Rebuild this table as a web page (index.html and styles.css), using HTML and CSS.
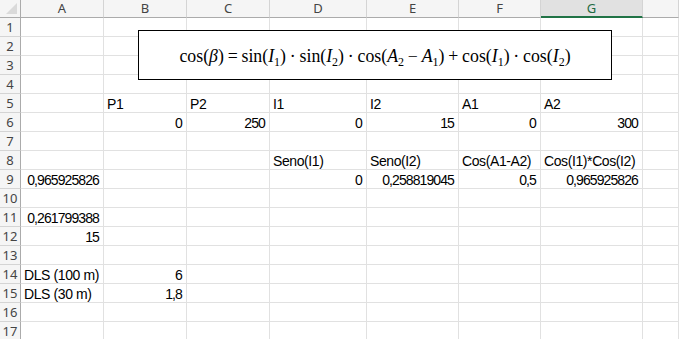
FILE: index.html
```html
<!DOCTYPE html>
<html lang="es">
<head>
<meta charset="utf-8">
<title>Hoja</title>
<link rel="stylesheet" href="styles.css">
</head>
<body>
<div class="sheet">
  <div class="grid">
    <div class="corner"><span class="tri"></span></div>
    <div class="ch">A</div><div class="ch">B</div><div class="ch">C</div><div class="ch">D</div><div class="ch">E</div><div class="ch">F</div><div class="ch sel">G</div><div class="ch"></div>

    <div class="rh">1</div><div class="c"></div><div class="c"></div><div class="c"></div><div class="c"></div><div class="c"></div><div class="c"></div><div class="c"></div><div class="c"></div>
    <div class="rh">2</div><div class="c"></div><div class="c"></div><div class="c"></div><div class="c"></div><div class="c"></div><div class="c"></div><div class="c"></div><div class="c"></div>
    <div class="rh">3</div><div class="c"></div><div class="c"></div><div class="c"></div><div class="c"></div><div class="c"></div><div class="c"></div><div class="c"></div><div class="c"></div>
    <div class="rh">4</div><div class="c"></div><div class="c"></div><div class="c"></div><div class="c"></div><div class="c"></div><div class="c"></div><div class="c"></div><div class="c"></div>
    <div class="rh">5</div><div class="c"></div><div class="c">P1</div><div class="c">P2</div><div class="c">I1</div><div class="c">I2</div><div class="c">A1</div><div class="c">A2</div><div class="c"></div>
    <div class="rh">6</div><div class="c"></div><div class="c n">0</div><div class="c n">250</div><div class="c n">0</div><div class="c n">15</div><div class="c n">0</div><div class="c n">300</div><div class="c"></div>
    <div class="rh">7</div><div class="c"></div><div class="c"></div><div class="c"></div><div class="c"></div><div class="c"></div><div class="c"></div><div class="c"></div><div class="c"></div>
    <div class="rh">8</div><div class="c"></div><div class="c"></div><div class="c"></div><div class="c">Seno(I1)</div><div class="c">Seno(I2)</div><div class="c">Cos(A1-A2)</div><div class="c">Cos(I1)*Cos(I2)</div><div class="c"></div>
    <div class="rh">9</div><div class="c n">0,965925826</div><div class="c"></div><div class="c"></div><div class="c n">0</div><div class="c n">0,258819045</div><div class="c n">0,5</div><div class="c n">0,965925826</div><div class="c"></div>
    <div class="rh">10</div><div class="c"></div><div class="c"></div><div class="c"></div><div class="c"></div><div class="c"></div><div class="c"></div><div class="c"></div><div class="c"></div>
    <div class="rh">11</div><div class="c n">0,261799388</div><div class="c"></div><div class="c"></div><div class="c"></div><div class="c"></div><div class="c"></div><div class="c"></div><div class="c"></div>
    <div class="rh">12</div><div class="c n">15</div><div class="c"></div><div class="c"></div><div class="c"></div><div class="c"></div><div class="c"></div><div class="c"></div><div class="c"></div>
    <div class="rh">13</div><div class="c"></div><div class="c"></div><div class="c"></div><div class="c"></div><div class="c"></div><div class="c"></div><div class="c"></div><div class="c"></div>
    <div class="rh">14</div><div class="c">DLS (100 m)</div><div class="c n">6</div><div class="c"></div><div class="c"></div><div class="c"></div><div class="c"></div><div class="c"></div><div class="c"></div>
    <div class="rh">15</div><div class="c">DLS (30 m)</div><div class="c n">1,8</div><div class="c"></div><div class="c"></div><div class="c"></div><div class="c"></div><div class="c"></div><div class="c"></div>
    <div class="rh">16</div><div class="c"></div><div class="c"></div><div class="c"></div><div class="c"></div><div class="c"></div><div class="c"></div><div class="c"></div><div class="c"></div>
    <div class="rh">17</div><div class="c"></div><div class="c"></div><div class="c"></div><div class="c"></div><div class="c"></div><div class="c"></div><div class="c"></div><div class="c"></div>
  </div>

  <div class="equation">
    <span class="math">cos(<i>β</i>)<span class="op">=</span>sin(<i>I</i><sub>1</sub>)<span class="op">·</span>sin(<i>I</i><sub>2</sub>)<span class="op">·</span>cos(<i>A</i><sub>2</sub><span class="op">−</span><i>A</i><sub>1</sub>)<span class="op">+</span>cos(<i>I</i><sub>1</sub>)<span class="op">·</span>cos(<i>I</i><sub>2</sub>)</span>
  </div>
</div>
</body>
</html>
```

FILE: styles.css
```css
html, body {
  margin: 0;
  padding: 0;
  background: #ffffff;
  overflow: hidden;
}

.sheet {
  position: relative;
  width: 679px;
  height: 339px;
  overflow: hidden;
}

.grid {
  display: grid;
  grid-template-columns: 21px 83px 83px 83px 97px 92px 82px 102px 1fr;
  grid-template-rows: 18px repeat(17, 19px);
  font-family: "Liberation Sans", Arial, sans-serif;
  font-size: 14px;
  letter-spacing: -0.4px;
  color: #000;
}

.corner,
.ch,
.rh,
.c {
  box-sizing: border-box;
}

.corner {
  position: relative;
  background: #f5f5f5;
  border-right: 1px solid #ababab;
  border-bottom: 1px solid #ababab;
}

.tri {
  position: absolute;
  right: 3px;
  bottom: 3px;
  width: 0;
  height: 0;
  border-left: 11px solid transparent;
  border-bottom: 11px solid #dadada;
}

.ch {
  background: #f5f5f5;
  border-right: 1px solid #d4d4d4;
  border-bottom: 1px solid #ababab;
  font-family: "Noto Sans", "Open Sans", sans-serif;
  font-size: 13px;
  letter-spacing: 0;
  line-height: 17px;
  color: #444;
  text-align: center;
}

.ch.sel {
  background: #e1e1e1;
  color: #1e6b42;
  border-bottom: 2px solid #217346;
}

.rh {
  background: #f5f5f5;
  border-right: 1px solid #ababab;
  border-bottom: 1px solid #d4d4d4;
  font-family: "Noto Sans", "Open Sans", sans-serif;
  font-size: 13px;
  letter-spacing: 0;
  line-height: 18px;
  color: #444;
  text-align: center;
}

.c {
  border-right: 1px solid #e1e1e1;
  border-bottom: 1px solid #e1e1e1;
  padding: 1px 3px 0 3px;
  line-height: 18px;
  white-space: nowrap;
  overflow: visible;
}

.c.n {
  text-align: right;
  letter-spacing: -0.9px;
  padding-right: 4px;
}

.equation {
  position: absolute;
  left: 138px;
  top: 30px;
  width: 474px;
  height: 50px;
  box-sizing: border-box;
  border: 1px solid #000;
  background: #fff;
  display: flex;
  align-items: center;
  justify-content: center;
  padding-top: 2px;
}

.math {
  font-family: "Liberation Serif", "DejaVu Serif", serif;
  font-size: 17.8px;
  color: #000;
  white-space: nowrap;
}

.math i {
  font-style: italic;
}

.math sub {
  font-size: 12px;
  vertical-align: -4px;
  line-height: 0;
}

.op {
  padding: 0 3.8px;
}
```
